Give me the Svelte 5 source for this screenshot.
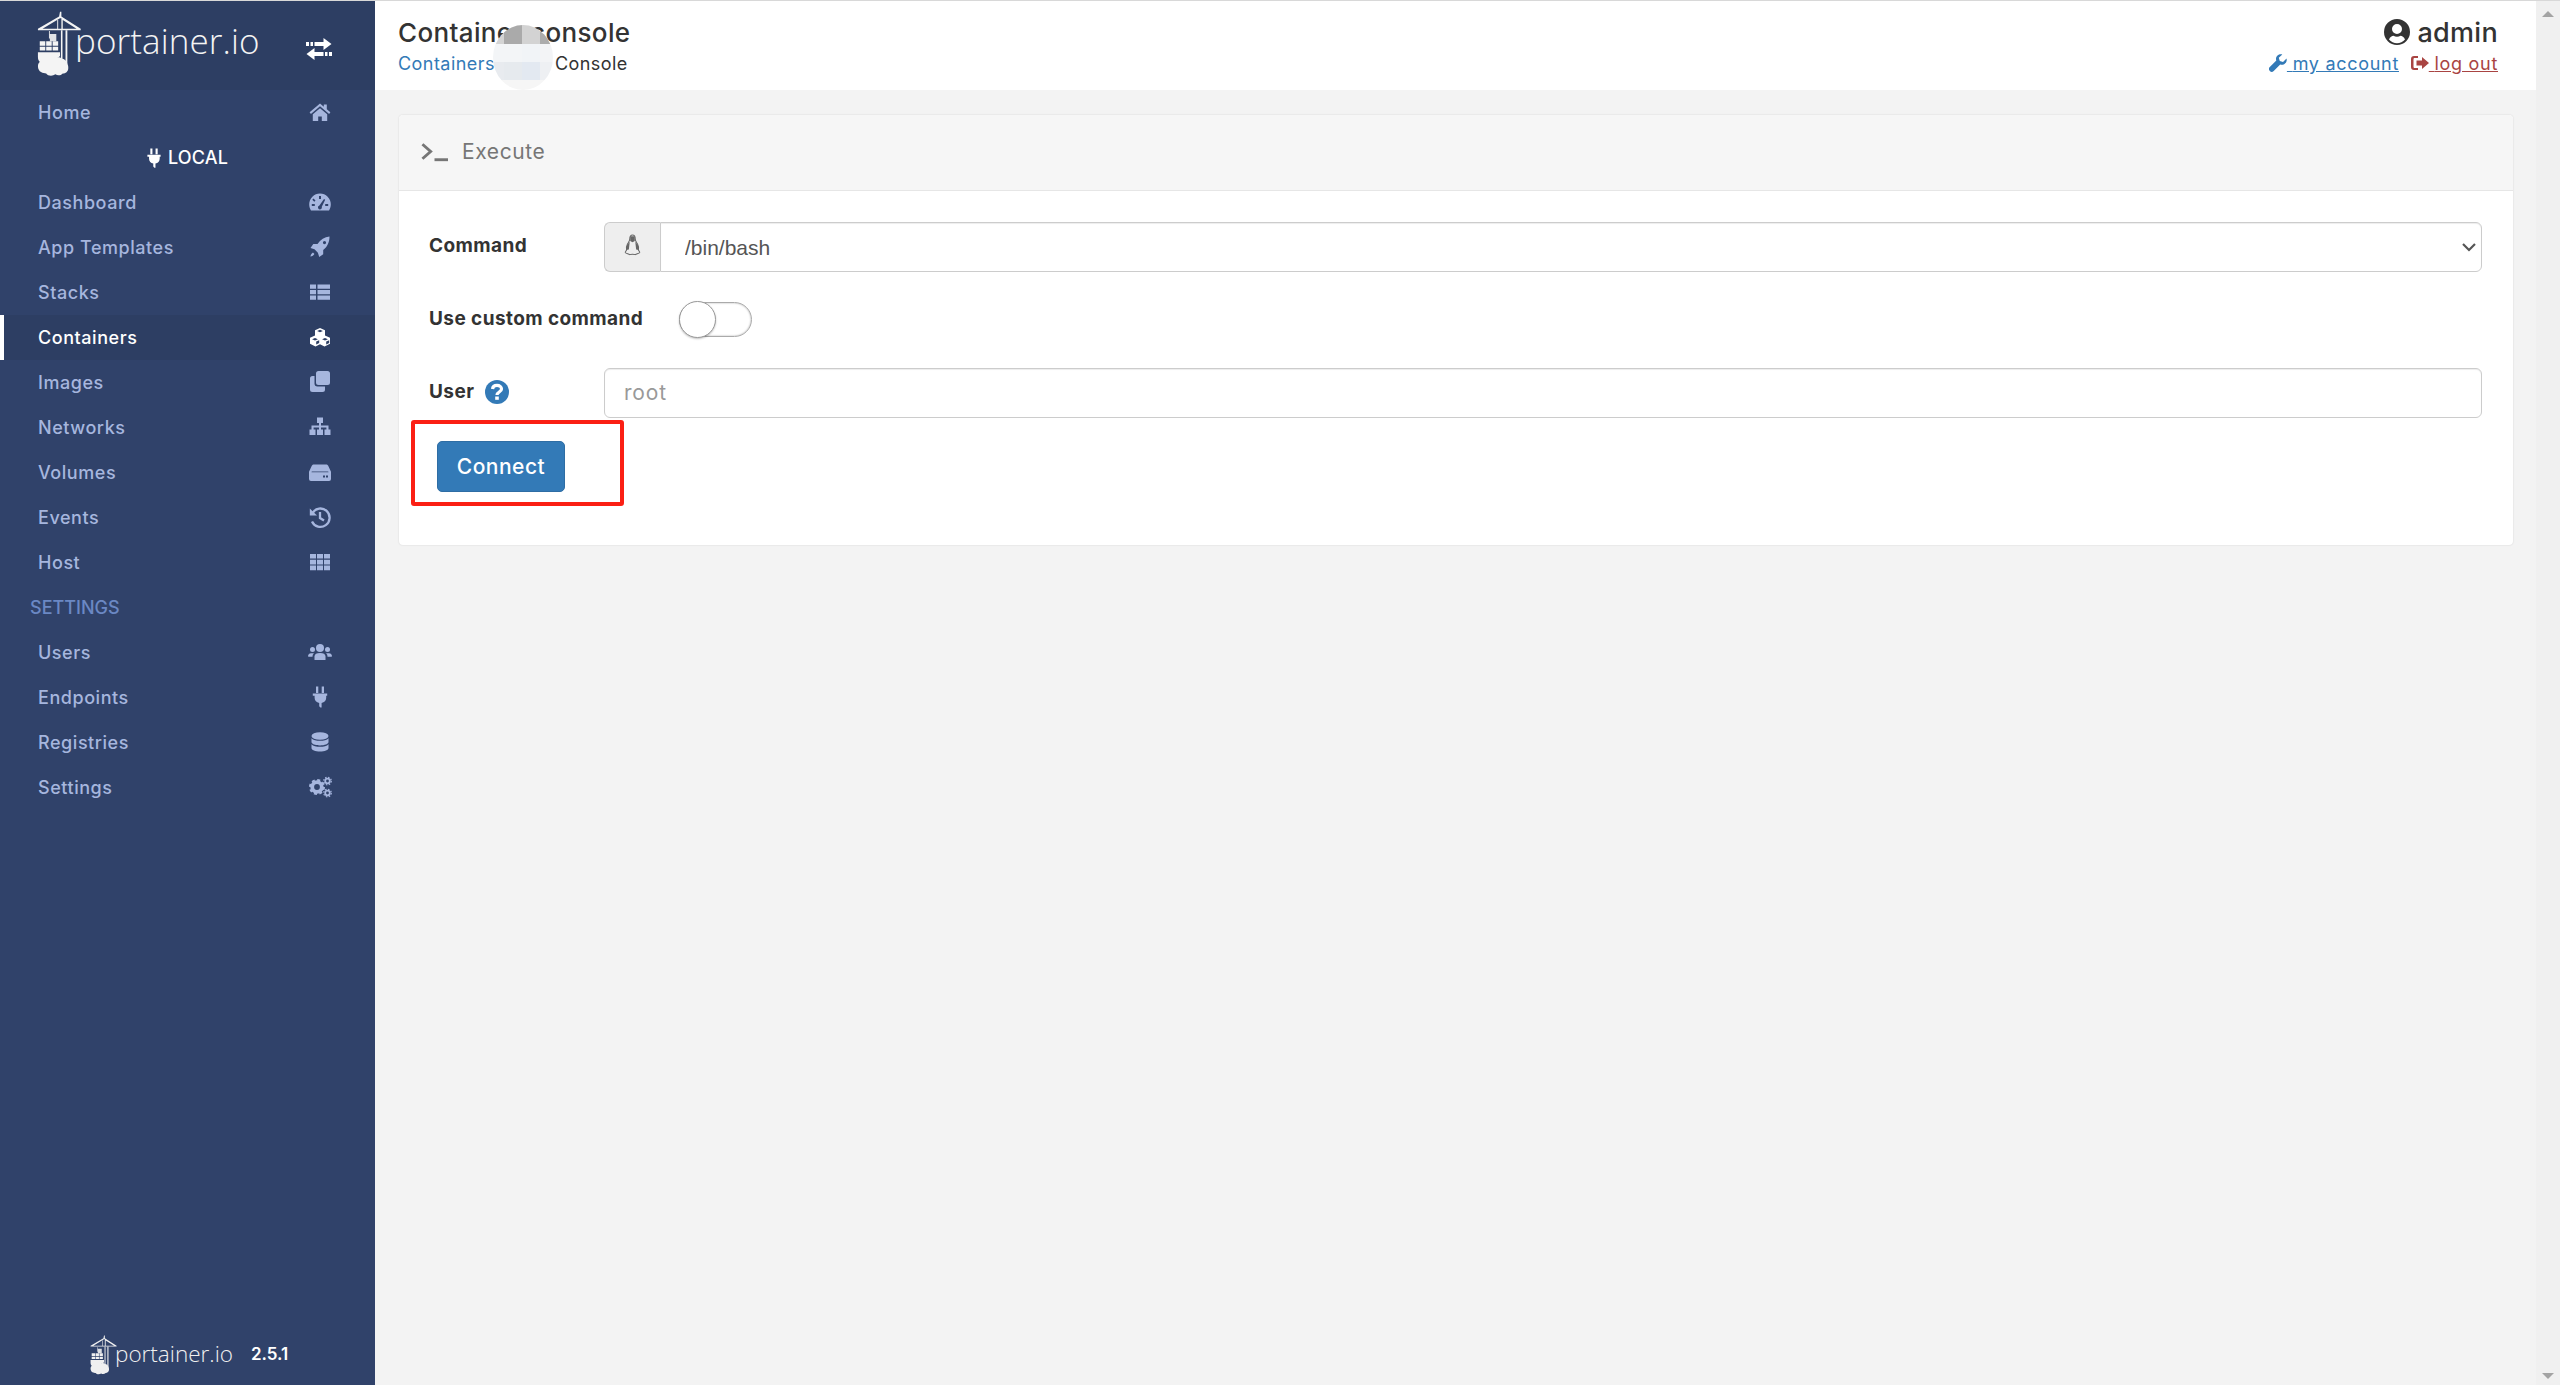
<script>
  const icons = {
    home: '<path d="M12 3.500 1.600 12.300l1.300 1.600L12 6.300l9.100 7.600 1.300-1.600-3.600-3V4.600h-3v2.200z"/><path d="M12 8.200 4.800 14.200V21h5.400v-4.600h3.600V21h5.400v-6.800z"/>',
    dashboard: '<path fill-rule="evenodd" d="M12 3.500A10.800 10.800 0 0 0 1.200 14.300c0 2.300.6 4.500 1.800 6.200h18c1.200-1.700 1.800-3.900 1.800-6.200A10.800 10.800 0 0 0 12 3.500zM11 6v3h2V6zM5.500 8.500l-1.200 1.200 2 2 1.200-1.200zM3.800 14v2h3v-2zM17.200 14v2h3v-2zM16 9l-4.600 6.500a2 2 0 1 0 2.400 1.200l3.400-7z"/>',
    rocket: '<path fill-rule="evenodd" d="M21.500 1.500c-5 .5-9 3.200-12 7.500H5.300L2.500 13l4 1.300 3.400 3.400 1.300 4.300 4-2.800v-4.200c4-3.200 6.300-7.500 6.300-13.500zM16.500 6a1.600 1.600 0 1 1 0 3.200 1.600 1.600 0 0 1 0-3.200z"/><path d="M5 17.500c-1.500.8-2.300 2.200-2.600 4 1.800-.3 3.200-1.100 4-2.600z"/>',
    list: '<path d="M2 4.500h6v4.300H2zM9.500 4.500h12.500v4.300H9.500zM2 10h6v4.300H2zM9.500 10h12.500v4.300H9.500zM2 15.500h6v4.300H2zM9.500 15.500h12.500v4.300H9.500z"/>',
    cubes: '<path fill-rule="evenodd" d="M12 3 7 5.200v5.400L2 12.800v6l5.500 2.700 4.500-2.200 4.500 2.200 5.500-2.700v-6l-5-2.200V5.200zM12 4.800l2.900 1.200L12 7.200 9.100 6zM7 13l2.900 1.200L7 15.400l-2.900-1.200zM17 13l2.900 1.200-2.900 1.200-2.900-1.200zM8.200 16.600l3-1.300v2.700l-3 1.500zM18.200 16.600l3-1.300v2.700l-3 1.500z"/>',
    clone: '<path d="M8 3.500a2.500 2.500 0 0 1 2.500-2.500h9A2.500 2.500 0 0 1 22 3.500v9a2.500 2.500 0 0 1-2.500 2.500h-9A2.500 2.500 0 0 1 8 12.500z"/><path d="M6.500 6H4.500A2.500 2.500 0 0 0 2 8.500v11A2.500 2.500 0 0 0 4.500 22h10a2.500 2.500 0 0 0 2.500-2.500v-3H9.500a3 3 0 0 1-3-3z"/>',
    sitemap: '<path d="M9 2.500h6v5.500h-2v2.500h7.500v4H22.500v5.500h-6v-5.500h1.900V12.500H13v2h2v5.500H9v-5.500h2v-2H5.600v2h1.900v5.500h-6v-5.500h2v-4H11V8H9z"/>',
    hdd: '<path fill-rule="evenodd" d="M6 4.500h12c1 0 1.700.5 2.200 1.300l2.800 6V19a2 2 0 0 1-2 2H3a2 2 0 0 1-2-2v-7.200l2.800-6C4.300 5 5 4.500 6 4.500zM3.500 12.200h17l-.3-.6H3.800zM15 15.500v2h2v-2zM18 15.500v2h2v-2z"/>',
    history: '<path fill="none" stroke="currentColor" stroke-width="2.300" d="M4.500 8A9.200 9.200 0 1 1 4 16.500"/><path d="M1.800 3.500 9 10.500H1.800z"/><path fill="none" stroke="currentColor" stroke-width="2.300" d="M12 7v6l4 2.500"/>',
    th: '<path d="M2 4h6v4.600H2zM9 4h6v4.600H9zM16 4h6v4.600h-6zM2 9.800h6v4.600H2zM9 9.800h6v4.600H9zM16 9.800h6v4.600h-6zM2 15.600h6v4.600H2zM9 15.600h6v4.600H9zM16 15.600h6v4.600h-6z"/>',
    users: '<circle cx="12" cy="8" r="4"/><circle cx="4.500" cy="9.500" r="2.500"/><circle cx="19.500" cy="9.500" r="2.500"/><path d="M6.500 20v-3.500c0-2.500 2-3.500 5.500-3.500s5.500 1 5.500 3.500V20z"/><path d="M0 16.500c0-2 1-3 3-3.200h3c-1 .8-1.500 2-1.500 3.500H1zM24 16.500c0-2-1-3-3-3.200h-3c1 .8 1.500 2 1.500 3.500H23z"/>',
    plug: '<path d="M8 1.500h2.300v6.500H8zM13.700 1.500H16v6.500h-2.300zM4.800 8.500h14.400v2.200h-1v2c0 2.800-1.900 4.800-4.600 5.200v4.600h-1.200l-1.200-1.200v-3.400c-2.700-.4-4.600-2.400-4.600-5.200v-2h-1.800z"/>',
    database: '<ellipse cx="12" cy="6" rx="8.500" ry="3.800"/><path d="M3.500 8.200c1.500 1.800 5 2.600 8.500 2.600s7-.8 8.500-2.600V12c0 2-3.800 3.400-8.500 3.400S3.500 14 3.500 12zM3.500 14.200c1.500 1.800 5 2.600 8.500 2.600s7-.8 8.500-2.600V18c0 2-3.800 3.600-8.500 3.600S3.500 20 3.500 18z"/>',
    cogs: '<circle cx="9" cy="12" r="4.800" fill="none" stroke="currentColor" stroke-width="3.800"/><circle cx="9" cy="12" r="7" fill="none" stroke="currentColor" stroke-width="2" stroke-dasharray="3 2.500"/><circle cx="19.500" cy="6" r="2.300" fill="none" stroke="currentColor" stroke-width="1.800"/><circle cx="19.500" cy="6" r="3.800" fill="none" stroke="currentColor" stroke-width="1.200" stroke-dasharray="1.500 1.500"/><circle cx="19.500" cy="18" r="2.300" fill="none" stroke="currentColor" stroke-width="1.800"/><circle cx="19.500" cy="18" r="3.800" fill="none" stroke="currentColor" stroke-width="1.200" stroke-dasharray="1.500 1.500"/>'
  };

  const primary = [
    { label: 'Dashboard', icon: 'dashboard' },
    { label: 'App Templates', icon: 'rocket' },
    { label: 'Stacks', icon: 'list' },
    { label: 'Containers', icon: 'cubes', active: true },
    { label: 'Images', icon: 'clone' },
    { label: 'Networks', icon: 'sitemap' },
    { label: 'Volumes', icon: 'hdd' },
    { label: 'Events', icon: 'history' },
    { label: 'Host', icon: 'th' }
  ];
  const settings = [
    { label: 'Users', icon: 'users' },
    { label: 'Endpoints', icon: 'plug' },
    { label: 'Registries', icon: 'database' },
    { label: 'Settings', icon: 'cogs' }
  ];
  const tiles = ['#d4d4d4','#aaaaaa','#d3d3d3','#acacac','#f3f5f7','#f3f5f7','#f1f4f7','#f3f4f6','#e8ebef','#e6eaee','#e3e9f1','#eef0f3','#f6f6f6','#f6f6f6','#f6f6f6','#f6f6f6'];
</script>

{#snippet crane()}
  <svg class="crane" viewBox="0 0 50 70" fill="currentColor" aria-hidden="true">
    <path d="M25 0h1.500v5l21 13.500v1.500H1v-1.500L24 5zM25 7 6 18.500h16V9h1v9.500h3.500V7zM28 9v9.500h15z" fill-rule="evenodd"/>
    <path d="M26 20h1.700v38H26zM31 20h2v38h-2z"/>
    <path d="M13 21h1v8h-1zM14 24h7v8h-7z" opacity=".9"/>
    <path d="M3 32h6v5H3zM10 32h6v5h-6zM17 32h6v5h-6zM3 38h6v4H3zM10 38h6v4h-6zM17 38h6v4h-6z"/>
    <path d="M1 44h24v4c-2 2-4 3-6 3-6 0-11 3-14 5-3-2-4-4-4-7z"/>
    <path d="M12 48c3-1 6 0 8 2 2-1 5-1 7 1 2 0 6 2 6 6 1 1 1 3 1 4 0 4-3 6-6 6-2 2-5 3-8 1-3 2-8 2-10-1-3 0-9-1-9-8 0-3 2-5 5-6 0-2 3-4 6-5z"/>
  </svg>
{/snippet}

<div class="page">
  <aside class="sidebar">
    <div class="brand">
      <div class="logo">
        {@render crane()}
        <span class="logo-text">portainer.io</span>
      </div>
      <svg class="swap" viewBox="0 0 28 24" fill="currentColor" aria-hidden="true">
        <path d="M1 5h3v4H1zM5.500 5h2.500v4H5.500zM9.500 5h9V1l8 6-8 6V9h-9zM27 15h-3v4h3zM22.500 15H20v4h2.500zM18.500 15h-9v-4l-8 6 8 6v-4h9z"/>
      </svg>
    </div>
    <nav class="nav">
      <a class="row"><span>Home</span><svg class="ic" viewBox="0 0 24 24" fill="currentColor">{@html icons.home}</svg></a>
      <div class="endpoint">
        <svg class="plug-w" viewBox="0 0 24 24" fill="currentColor">{@html icons.plug}</svg>
        <span>LOCAL</span>
      </div>
      {#each primary as item}
        <a class="row" class:active={item.active}>
          <span>{item.label}</span>
          <svg class="ic" viewBox="0 0 24 24" fill="currentColor">{@html icons[item.icon]}</svg>
        </a>
      {/each}
      <div class="section">SETTINGS</div>
      {#each settings as item}
        <a class="row">
          <span>{item.label}</span>
          <svg class="ic" viewBox="0 0 24 24" fill="currentColor">{@html icons[item.icon]}</svg>
        </a>
      {/each}
    </nav>
    <div class="foot">
      {@render crane()}
      <span class="foot-text">portainer.io</span>
      <span class="version">2.5.1</span>
    </div>
  </aside>

  <main class="main">
    <header class="topbar">
      <div class="crumbs">
        <div class="title">Container console</div>
        <div class="path"><a class="link">Containers</a><span class="sep">&gt; &gt;</span><span>Console</span></div>
      </div>
      <div class="account">
        <div class="who">
          <svg class="user-ic" viewBox="0 0 26 26" aria-hidden="true">
            <path fill="#333" fill-rule="evenodd" d="M13 0a13 13 0 1 1 0 26 13 13 0 0 1 0-26zM13 5a5 5 0 1 0 0 10 5 5 0 0 0 0-10zM5 20.500a10.500 10.500 0 0 0 16 0c-1-2.500-3-3.700-4.500-3.700-1 .6-2.200 1-3.500 1s-2.500-.4-3.500-1C8 16.800 6 18 5 20.500z"/>
          </svg>
          <span>admin</span>
        </div>
        <div class="links">
          <a class="link u">
            <svg class="tiny" viewBox="0 0 18 18" fill="currentColor"><path d="M17.500 4.500 14 8l-3.200-1-1-3.200L13.300.5C10.500-.5 7 1.500 7 5c0 .6.100 1.100.3 1.600L.8 13a2.700 2.700 0 0 0 3.900 3.900l6.500-6.500c3.600 1.300 7.500-2 6.300-5.900z"/></svg>
            <span> my account </span>
          </a>
          <a class="danger u">
            <svg class="tiny" viewBox="0 0 18 18" fill="currentColor"><path d="M7 2v2H3.500C3 4 2.500 4.500 2.500 5v8c0 .5.500 1 1 1H7v2H3a3 3 0 0 1-3-3V5a3 3 0 0 1 3-3zM11 3l7 6-7 6v-3.500H5.500v-5H11z"/></svg>
            <span> log out</span>
          </a>
        </div>
      </div>
      <div class="mosaic" aria-hidden="true">
        {#each tiles as t}<i style="background:{t}"></i>{/each}
      </div>
    </header>

    <section class="content">
      <div class="card">
        <div class="card-head">
          <svg class="term" viewBox="0 0 28 20" fill="none" stroke="#767676" stroke-width="3" aria-hidden="true">
            <path d="M1.500 2 10 9.500 1.500 17"/><path d="M14 18h14"/>
          </svg>
          <span>Execute</span>
        </div>
        <form class="form">
          <div class="field">
            <label class="lbl" for="cmd">Command</label>
            <div class="group">
              <span class="addon">
                <svg class="tux" viewBox="0 0 18 24" fill="none" stroke="#666" stroke-width="1.100" aria-hidden="true">
                  <path d="M9 1C6.800 1 6 3 6 5.500c0 2-1 3-2.500 5.500C2.500 13 2 15 2.500 17.500L1 20c0 1.500 3.500 1.500 5 2.500 1-.7 5-.7 6 0 1.500-1 5-1 5-2.500l-1.500-2.500c.5-2.500 0-4.500-1-6.500C13 8.500 12 7.500 12 5.500 12 3 11.200 1 9 1z"/>
                  <path fill="#666" stroke="none" d="M6.500 2.500h5v5L9 9 6.500 7.500zM3 12 6 8.500 5 17l-2.500.5zM15 12l-3-3.500L13 17l2.500.5z"/>
                </svg>
              </span>
              <div class="select-wrap">
                <select id="cmd" class="select"><option>/bin/bash</option></select>
                <svg class="chev" viewBox="0 0 14 10" fill="none" stroke="#555" stroke-width="2.200" aria-hidden="true"><path d="M1 2l6 6 6-6"/></svg>
              </div>
            </div>
          </div>
          <div class="field tall">
            <span class="lbl wide">Use custom command</span>
            <span class="toggle"><span class="knob"></span></span>
          </div>
          <div class="field">
            <label class="lbl" for="usr">User
              <svg class="help" viewBox="0 0 24 24" aria-hidden="true">
                <circle cx="12" cy="12" r="12" fill="#337ab7"/>
                <path fill="none" stroke="#fff" stroke-width="3.200" d="M7.500 9c.3-2.500 2-3.600 4.500-3.600 2.700 0 4.500 1.500 4.500 3.500 0 3.200-4.500 3-4.500 6.100"/>
                <rect x="10.200" y="16.500" width="3.600" height="3.300" fill="#fff"/>
              </svg>
            </label>
            <input id="usr" class="input" placeholder="root" />
          </div>
          <div class="mark"><button type="button" class="btn">Connect</button></div>
        </form>
      </div>
    </section>
  </main>

  <div class="scrollbar" aria-hidden="true">
    <i class="arrow up"></i>
    <i class="arrow down"></i>
  </div>
</div>

<style>
  :global(body) { margin: 0; background: #f3f3f3; }
  .page {
    display: flex; width: 2560px; height: 1385px; overflow: hidden;
    box-sizing: border-box; border-top: 1px solid #d8d8d8;
    font-family: Inter, "Noto Sans", sans-serif; color: #333;
  }
  .sidebar {
    width: 375px; flex: none; display: flex; flex-direction: column;
    background: #30426a; color: #a6b6de;
  }
  .brand {
    height: 89px; flex: none; background: #2d3e63; color: #fff;
    display: flex; align-items: center; justify-content: space-between;
    padding: 0 42px 0 37px; box-sizing: border-box;
  }
  .logo { display: flex; align-items: center; color: #f4f4f4; }
  .logo .crane { width: 46px; height: 66px; margin-top: -4px; }
  .logo-text {
    font-family: "Open Sans", sans-serif; font-weight: 300; font-size: 35px; line-height: 1;
    margin: -11px 0 0 -8px; letter-spacing: .1px;
  }
  .swap { width: 28px; height: 24px; margin-top: 6px; }
  .nav { display: flex; flex-direction: column; }
  .row, .endpoint, .section { height: 45px; display: flex; align-items: center; box-sizing: border-box; }
  .row {
    justify-content: space-between; padding: 0 43px 1px 38px;
    font-size: 18px; font-weight: 500; letter-spacing: .55px;
  }
  .row.active { background: #2d3e63; color: #fff; box-shadow: inset 4px 0 0 #fff; }
  .ic { width: 24px; height: 24px; }
  .endpoint { justify-content: center; gap: 3px; color: #fff; font-size: 18px; font-weight: 500; padding-right: 4px; letter-spacing: .2px; }
  .plug-w { width: 22px; height: 22px; }
  .section { padding-left: 30px; color: #6b88c4; font-size: 18px; font-weight: 500; }
  .foot { margin-top: auto; height: 60px; flex: none; display: flex; align-items: center; padding-left: 90px; color: #f0f0f0; box-sizing: border-box; }
  .foot .crane { width: 28px; height: 40px; margin-right: -3px; }
  .foot-text { font-family: "Open Sans", sans-serif; font-weight: 300; font-size: 22.5px; margin-top: -3px; }
  .version { margin-left: 18px; color: #fff; font-size: 17px; font-weight: 600; margin-top: -3px; }

  .main { flex: 1; min-width: 0; display: flex; flex-direction: column; }
  .topbar {
    position: relative; height: 89px; flex: none; background: #fff;
    display: flex; justify-content: space-between; padding: 0 38px 0 23px; box-sizing: border-box;
  }
  .title { font-size: 26px; font-weight: 500; margin-top: 15px; line-height: 33px; color: #333; letter-spacing: .35px; }
  .path { font-size: 18px; font-weight: 400; line-height: 26px; margin-top: 2px; letter-spacing: .45px; color: #333; display: flex; }
  .sep { width: 60px; text-align: center; }
  .link { color: #337ab7; }
  .danger { color: #a94442; }
  .u { text-decoration: underline; }
  .account { display: flex; flex-direction: column; align-items: flex-end; }
  .who { display: flex; align-items: center; gap: 7px; margin-top: 15px; height: 32px; font-size: 27px; font-weight: 500; letter-spacing: .3px; }
  .user-ic { width: 26px; height: 26px; }
  .links { margin-top: 3px; line-height: 26px; font-size: 18px; letter-spacing: .7px; }
  .links a + a { margin-left: 6px; }
  .tiny { width: 18px; height: 18px; vertical-align: -2px; }
  .mosaic {
    position: absolute; left: 118px; top: 24px; width: 60px; height: 65px; border-radius: 50%;
    overflow: hidden; display: grid; grid-template-columns: 11px 18px 18px 13px; grid-template-rows: 19px 18px 18px 10px;
  }

  .content { flex: 1; padding: 25px 23px 0 24px; }
  .card { background: #fff; border-radius: 4px; box-shadow: 0 0 2px rgba(0,0,0,.14); }
  .card-head {
    height: 76px; box-sizing: border-box; background: #f6f6f6; border-bottom: 1px solid #e6e6e6;
    border-radius: 4px 4px 0 0; display: flex; align-items: center; padding: 0 0 2px 22px; gap: 14px;
    color: #767676; font-size: 21px; font-weight: 400; letter-spacing: .6px;
  }
  .term { width: 27px; height: 20px; }
  .form { padding: 31px 31px 39px 30px; display: flex; flex-direction: column; }
  .field { display: flex; align-items: center; height: 50px; }
  .field.tall { height: 96px; }
  .lbl { width: 175px; flex: none; font-size: 19px; font-weight: 700; color: #333; letter-spacing: .42px; display: flex; align-items: center; gap: 11px; padding-bottom: 3px; box-sizing: border-box; }
  .lbl.wide { width: 250px; }
  .help { width: 24px; height: 24px; }
  .group { flex: 1; display: flex; height: 50px; }
  .addon {
    width: 56px; box-sizing: border-box; background: #eee; border: 1px solid #ccc; border-right: 0;
    border-radius: 6px 0 0 6px; display: flex; align-items: center; justify-content: center;
  }
  .tux { width: 17px; height: 22px; margin-top: -4px; }
  .select-wrap { position: relative; flex: 1; }
  .select {
    appearance: none; width: 100%; height: 50px; box-sizing: border-box; border: 1px solid #ccc;
    border-radius: 0 6px 6px 0; background: #fff; padding: 0 0 0 24px; font: 21px "Liberation Sans", sans-serif; color: #555;
    box-shadow: inset 0 1px 1px rgba(0,0,0,.075);
  }
  .chev { position: absolute; right: 6px; top: 20px; width: 14px; height: 10px; pointer-events: none; }
  .toggle {
    display: block; position: relative; width: 73px; height: 35px; box-sizing: border-box; margin-top: -1px;
    border: 1px solid #aaa; border-radius: 18px; background: #fff; box-shadow: inset 0 0 2px rgba(0,0,0,.35);
  }
  .knob {
    position: absolute; left: -1px; top: -2px; width: 37px; height: 37px; box-sizing: border-box;
    border-radius: 50%; background: #fff; border: 1px solid #999; box-shadow: 0 1px 2px rgba(0,0,0,.25);
  }
  .input {
    flex: 1; height: 50px; box-sizing: border-box; border: 1px solid #ccc; border-radius: 6px; padding: 0 19px 1px;
    font: 400 21px Inter, sans-serif; letter-spacing: .8px; color: #555; box-shadow: inset 0 1px 1px rgba(0,0,0,.075); outline: none;
  }
  .input::placeholder { color: #999; opacity: 1; }
  .mark {
    align-self: flex-start; margin: 2px 0 0 -18px; box-sizing: border-box; width: 213px; height: 86px;
    border: 4px solid #fb1f14; border-radius: 3px; padding: 17px 0 0 22px;
  }
  .btn {
    width: 128px; height: 51px; box-sizing: border-box; background: #337ab7; color: #fff; border: 1px solid #2e6da4;
    border-radius: 5px; font: 500 21px Inter, sans-serif; letter-spacing: .5px; padding: 0 0 1px;
  }
  .scrollbar { width: 24px; flex: none; background: #f0f0f0; display: flex; flex-direction: column; justify-content: space-between; align-items: center; padding: 10px 0 6px; box-sizing: border-box; }
  .arrow { width: 0; height: 0; border-left: 6px solid transparent; border-right: 6px solid transparent; }
  .arrow.up { border-bottom: 6px solid #a3a3a3; }
  .arrow.down { border-top: 6px solid #a3a3a3; }
  a { cursor: pointer; }
</style>
